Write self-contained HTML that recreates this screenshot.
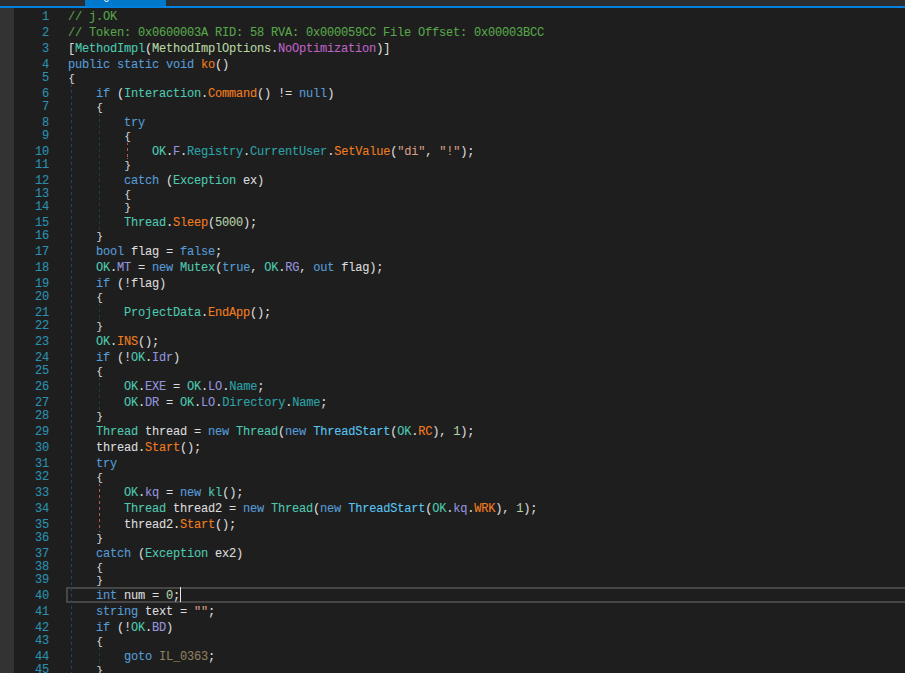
<!DOCTYPE html>
<html><head><meta charset="utf-8"><style>
html,body{margin:0;padding:0;}
body{width:905px;height:673px;overflow:hidden;background:#1e1e1e;position:relative;font-family:"Liberation Mono",monospace;}
#tabwell{position:absolute;left:0;top:0;width:905px;height:6px;background:#2d2d30;}
#tab{position:absolute;left:85px;top:0;width:81px;height:6px;background:#0078cc;}
#tabglyph{position:absolute;left:104px;top:-4px;width:3px;height:4px;border:1px solid #e8f0ff;border-radius:50%;}
#tabline{position:absolute;left:0;top:6px;width:905px;height:2px;background:#0080dc;}
#margin{position:absolute;left:0;top:8px;width:14px;height:665px;background:#333333;}
#hl{position:absolute;left:66px;top:587px;width:845px;height:12px;border:2px solid #464646;border-right:none;}
.ln{position:absolute;left:0;height:16px;width:905px;white-space:pre;font-size:12px;line-height:16px;letter-spacing:-0.2px;color:#dcdcdc;-webkit-text-stroke:0.1px currentColor;}
.ln i{font-style:normal;position:absolute;right:856px;top:0;color:#2b91af;}
.ln b{font-weight:normal;position:absolute;left:68px;top:0;}
.c{color:#57a64a}.k{color:#569cd6}.t{color:#4ec9b0}.e{color:#b8d7a3}.ef{color:#bd63c5}
.m{color:#f07d1e}.f{color:#9494de}.p{color:#2ca3a8}.s{color:#d69d85}.n{color:#b5cea8}
.d{color:#58c6f0}.l{color:#8e7f5e}
.g{position:absolute;width:1px;background-position:0 -1px !important;}
.gb{background:repeating-linear-gradient(to bottom,#1b466c 0 3px,transparent 3px 6px);}
.gg{background:repeating-linear-gradient(to bottom,#18491f 0 3px,transparent 3px 6px);}
.gr{background:repeating-linear-gradient(to bottom,#b45a52 0 3px,transparent 3px 6px);}
#caret{position:absolute;left:180px;top:587px;width:1px;height:15px;background:#e6e6e6;}

.br{display:inline-block;transform:translateY(1.5px) scale(0.88,0.85);transform-origin:50% 50%;}

</style></head><body>
<div id="tabwell"></div><div id="tab"></div><div id="tabglyph"></div><div id="tabline"></div>
<div id="margin"></div>
<div id="hl"></div>
<div class="g gb" style="left:71px;top:85px;height:588px"></div><div class="g gg" style="left:99px;top:114px;height:116px"></div><div class="g gr" style="left:127px;top:143px;height:16px"></div><div class="g gg" style="left:99px;top:304px;height:16px"></div><div class="g gg" style="left:99px;top:378px;height:32px"></div><div class="g gr" style="left:99px;top:484px;height:48px"></div><div class="g gg" style="left:99px;top:648px;height:16px"></div>
<div class="ln" style="top:9px"><i>1</i><b><span class="c">// j.OK</span></b></div><div class="ln" style="top:25px"><i>2</i><b><span class="c">// Token: 0x0600003A RID: 58 RVA: 0x000059CC File Offset: 0x00003BCC</span></b></div><div class="ln" style="top:41px"><i>3</i><b>[<span class="t">MethodImpl</span>(<span class="e">MethodImplOptions</span>.<span class="ef">NoOptimization</span>)]</b></div><div class="ln" style="top:57px"><i>4</i><b><span class="k">public static void </span><span class="m">ko</span>()</b></div><div class="ln" style="top:70px"><i>5</i><b><span class="br">{</span></b></div><div class="ln" style="top:86px"><i>6</i><b>    <span class="k">if</span> (<span class="t">Interaction</span>.<span class="m">Command</span>() != <span class="k">null</span>)</b></div><div class="ln" style="top:99px"><i>7</i><b>    <span class="br">{</span></b></div><div class="ln" style="top:115px"><i>8</i><b>        <span class="k">try</span></b></div><div class="ln" style="top:128px"><i>9</i><b>        <span class="br">{</span></b></div><div class="ln" style="top:144px"><i>10</i><b>            <span class="t">OK</span>.<span class="f">F</span>.<span class="p">Registry</span>.<span class="p">CurrentUser</span>.<span class="m">SetValue</span>(<span class="s">&quot;di&quot;</span>, <span class="s">&quot;!&quot;</span>);</b></div><div class="ln" style="top:157px"><i>11</i><b>        <span class="br">}</span></b></div><div class="ln" style="top:173px"><i>12</i><b>        <span class="k">catch</span> (<span class="t">Exception</span> ex)</b></div><div class="ln" style="top:186px"><i>13</i><b>        <span class="br">{</span></b></div><div class="ln" style="top:199px"><i>14</i><b>        <span class="br">}</span></b></div><div class="ln" style="top:215px"><i>15</i><b>        <span class="t">Thread</span>.<span class="m">Sleep</span>(<span class="n">5000</span>);</b></div><div class="ln" style="top:228px"><i>16</i><b>    <span class="br">}</span></b></div><div class="ln" style="top:244px"><i>17</i><b>    <span class="k">bool</span> flag = <span class="k">false</span>;</b></div><div class="ln" style="top:260px"><i>18</i><b>    <span class="t">OK</span>.<span class="f">MT</span> = <span class="k">new</span> <span class="t">Mutex</span>(<span class="k">true</span>, <span class="t">OK</span>.<span class="f">RG</span>, <span class="k">out</span> flag);</b></div><div class="ln" style="top:276px"><i>19</i><b>    <span class="k">if</span> (!flag)</b></div><div class="ln" style="top:289px"><i>20</i><b>    <span class="br">{</span></b></div><div class="ln" style="top:305px"><i>21</i><b>        <span class="t">ProjectData</span>.<span class="m">EndApp</span>();</b></div><div class="ln" style="top:318px"><i>22</i><b>    <span class="br">}</span></b></div><div class="ln" style="top:334px"><i>23</i><b>    <span class="t">OK</span>.<span class="m">INS</span>();</b></div><div class="ln" style="top:350px"><i>24</i><b>    <span class="k">if</span> (!<span class="t">OK</span>.<span class="f">Idr</span>)</b></div><div class="ln" style="top:363px"><i>25</i><b>    <span class="br">{</span></b></div><div class="ln" style="top:379px"><i>26</i><b>        <span class="t">OK</span>.<span class="f">EXE</span> = <span class="t">OK</span>.<span class="f">LO</span>.<span class="p">Name</span>;</b></div><div class="ln" style="top:395px"><i>27</i><b>        <span class="t">OK</span>.<span class="f">DR</span> = <span class="t">OK</span>.<span class="f">LO</span>.<span class="p">Directory</span>.<span class="p">Name</span>;</b></div><div class="ln" style="top:408px"><i>28</i><b>    <span class="br">}</span></b></div><div class="ln" style="top:424px"><i>29</i><b>    <span class="t">Thread</span> thread = <span class="k">new</span> <span class="t">Thread</span>(<span class="k">new</span> <span class="d">ThreadStart</span>(<span class="t">OK</span>.<span class="m">RC</span>), <span class="n">1</span>);</b></div><div class="ln" style="top:440px"><i>30</i><b>    thread.<span class="m">Start</span>();</b></div><div class="ln" style="top:456px"><i>31</i><b>    <span class="k">try</span></b></div><div class="ln" style="top:469px"><i>32</i><b>    <span class="br">{</span></b></div><div class="ln" style="top:485px"><i>33</i><b>        <span class="t">OK</span>.<span class="f">kq</span> = <span class="k">new</span> <span class="t">kl</span>();</b></div><div class="ln" style="top:501px"><i>34</i><b>        <span class="t">Thread</span> thread2 = <span class="k">new</span> <span class="t">Thread</span>(<span class="k">new</span> <span class="d">ThreadStart</span>(<span class="t">OK</span>.<span class="f">kq</span>.<span class="m">WRK</span>), <span class="n">1</span>);</b></div><div class="ln" style="top:517px"><i>35</i><b>        thread2.<span class="m">Start</span>();</b></div><div class="ln" style="top:530px"><i>36</i><b>    <span class="br">}</span></b></div><div class="ln" style="top:546px"><i>37</i><b>    <span class="k">catch</span> (<span class="t">Exception</span> ex2)</b></div><div class="ln" style="top:559px"><i>38</i><b>    <span class="br">{</span></b></div><div class="ln" style="top:572px"><i>39</i><b>    <span class="br">}</span></b></div><div class="ln" style="top:588px"><i>40</i><b>    <span class="k">int</span> num = <span class="n">0</span>;</b></div><div class="ln" style="top:604px"><i>41</i><b>    <span class="k">string</span> text = <span class="s">&quot;&quot;</span>;</b></div><div class="ln" style="top:620px"><i>42</i><b>    <span class="k">if</span> (!<span class="t">OK</span>.<span class="f">BD</span>)</b></div><div class="ln" style="top:633px"><i>43</i><b>    <span class="br">{</span></b></div><div class="ln" style="top:649px"><i>44</i><b>        <span class="k">goto</span> <span class="l">IL_0363</span>;</b></div><div class="ln" style="top:662px"><i>45</i><b>    <span class="br">}</span></b></div>
<div id="caret"></div>
</body></html>
